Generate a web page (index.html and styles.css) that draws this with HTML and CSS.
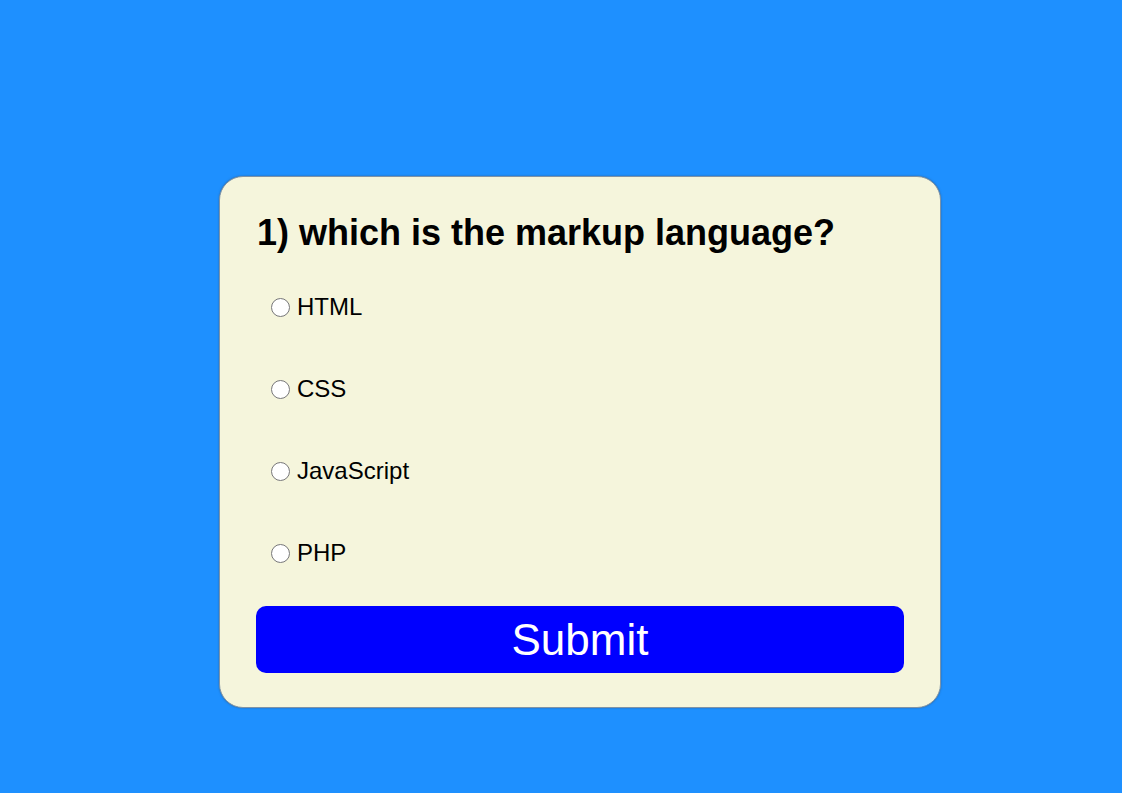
FILE: index.html
```html
<!DOCTYPE html>
<html lang="en">
<head>
<meta charset="utf-8">
<title>Quiz</title>
<link rel="stylesheet" href="styles.css">
</head>
<body>
  <div class="quiz-card">
    <h2 class="question">1) which is the markup language?</h2>
    <ul class="options">
      <li class="option"><input type="radio" name="answer" id="a"><label for="a">HTML</label></li>
      <li class="option"><input type="radio" name="answer" id="b"><label for="b">CSS</label></li>
      <li class="option"><input type="radio" name="answer" id="c"><label for="c">JavaScript</label></li>
      <li class="option"><input type="radio" name="answer" id="d"><label for="d">PHP</label></li>
    </ul>
    <button class="submit" type="button">Submit</button>
  </div>
</body>
</html>
```
FILE: styles.css
```css
* { box-sizing: border-box; }

body {
  margin: 0;
  min-height: 793px;
  background: #1e90ff;
  font-family: "Liberation Sans", Arial, sans-serif;
  padding: 176px 0 0 219px;
}

.quiz-card {
  width: 722px;
  height: 532px;
  background: #f5f5dc;
  border: 1px solid #7f93a6;
  border-radius: 24px;
  box-shadow: 0 0 2px rgba(60, 60, 60, 0.5);
  padding: 35px 36px 0 36px;
  display: flex;
  flex-direction: column;
}

.question {
  margin: 0;
  font-size: 36px;
  line-height: 41px;
  font-weight: bold;
  color: #000;
  padding-left: 1px;
}

.options {
  list-style: none;
  margin: 40px 0 0 0;
  padding: 0 0 0 15px;
  display: flex;
  flex-direction: column;
  gap: 54px;
}

.option {
  display: flex;
  align-items: center;
  height: 28px;
  font-size: 24px;
  color: #000;
}

.option input {
  width: 19px;
  height: 19px;
  margin: 0 7px 0 0;
}

.submit {
  margin-top: 39px;
  height: 67px;
  width: 648px;
  border: none;
  border-radius: 10px;
  background: #0000ff;
  color: #fff;
  font-family: "Liberation Sans", Arial, sans-serif;
  font-size: 44px;
  padding: 0;
  cursor: pointer;
}
```
